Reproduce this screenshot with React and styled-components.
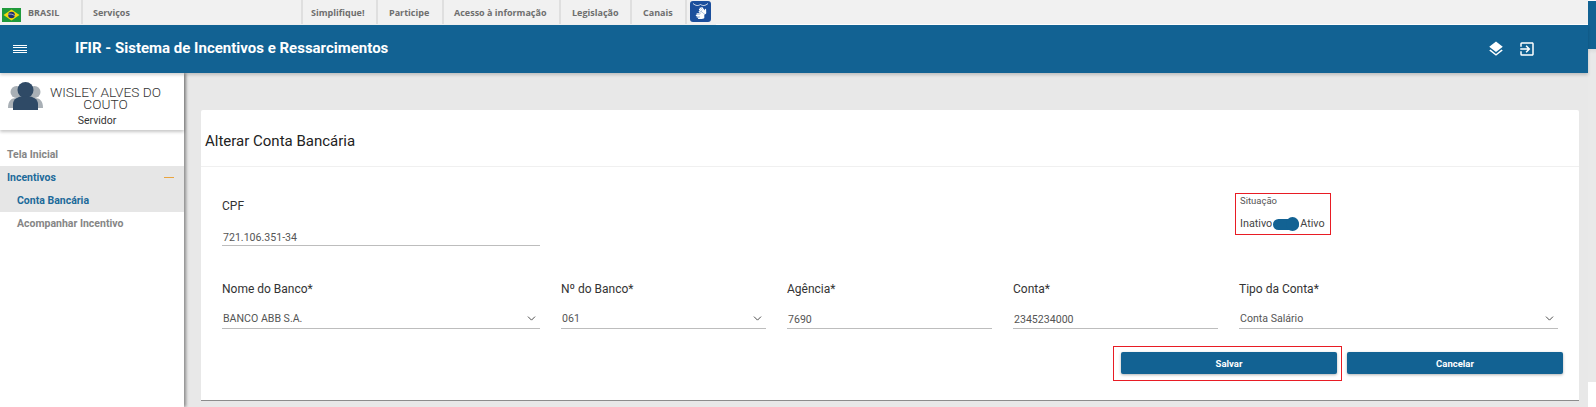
import React from "react";
import styled, { createGlobalStyle } from "styled-components";
import { MdLayers, MdExitToApp } from "react-icons/md";
import { FaSignLanguage } from "react-icons/fa";
import { ChevronDown } from "lucide-react";

const Global = createGlobalStyle`
  html, body { margin: 0; padding: 0; background: #fff; overflow: hidden; }
  * { box-sizing: border-box; }
  body { font-family: Roboto, "Liberation Sans", sans-serif; }
`;

const Page = styled.div`
  display: flex;
  width: 1596px;
  height: 407px;
  overflow: hidden;
`;
const Main = styled.div`
  width: 1588px;
  display: flex;
  flex-direction: column;
  background: #e8e8e8;
`;
const Strip = styled.div`
  width: 8px;
  display: flex;
  flex-direction: column;
  background: #fff;
`;
const StripBlue = styled.div`
  height: 48px;
  margin-top: 1px;
  background: #126293;
`;
const StripGrey = styled.div`
  height: 333px;
  background: linear-gradient(#dcdcdc, #e9e9e9 5px);
`;

const GovBar = styled.div`
  height: 25px;
  display: flex;
  background: #f1f1f1;
  font-family: "Open Sans", sans-serif;
  font-size: 9px;
  font-weight: 700;
  color: #6e6e6e;
`;
const Flag = styled.svg`
  width: 19px;
  height: 14px;
  margin: 5px 7px 0 2px;
  flex: none;
`;
const GovItem = styled.div`
  width: ${p => p.$w}px;
  height: 24px;
  padding-left: ${p => p.$pad}px;
  display: flex;
  align-items: center;
  border-right: ${p => (p.$sep ? "2px solid #dfdfdf" : "none")};
  flex: none;
`;
const SignButton = styled.div`
  width: 21px;
  height: 21px;
  margin: 1px 0 0 3px;
  border-radius: 3px;
  background: #1c4f9c;
  color: #fff;
  position: relative;
  display: flex;
  align-items: flex-end;
  justify-content: center;
  padding-bottom: 3px;
  flex: none;
`;
const Arch = styled.svg`
  position: absolute;
  left: 2px;
  top: 1px;
  width: 17px;
  height: 5px;
`;
const GovRest = styled.div`
  flex: 1;
  height: 25px;
  margin-left: 5px;
  border-bottom: 1px solid #fff;
`;

const Header = styled.header`
  height: 48px;
  background: #126293;
  display: flex;
  align-items: center;
  color: #fff;
  position: relative;
  z-index: 2;
  box-shadow: 0 2px 3px rgba(0, 0, 0, 0.18);
`;
const Burger = styled.div`
  width: 14px;
  height: 9px;
  margin-left: 13px;
  display: flex;
  flex-direction: column;
  justify-content: space-between;
  flex: none;
`;
const BurgerLine = styled.span`
  display: block;
  height: 1px;
  background: #fff;
`;
const AppTitle = styled.h1`
  margin: -2px 0 0 48px;
  font-size: 15px;
  font-weight: 700;
  line-height: 20px;
  flex: 1;
`;
const HeaderIcons = styled.div`
  display: flex;
  align-items: center;
  gap: 13px;
  margin-right: 52px;
`;

const Body = styled.div`
  flex: 1;
  display: flex;
  min-height: 0;
`;
const Sidebar = styled.aside`
  width: 184px;
  background: #fff;
  box-shadow: 2px 0 3px rgba(0, 0, 0, 0.4);
  flex: none;
  position: relative;
  z-index: 1;
`;
const Profile = styled.div`
  height: 57px;
  display: flex;
  padding: 6px 0 0 8px;
  box-shadow: 0 2px 3px rgba(0, 0, 0, 0.22);
`;
const Avatar = styled.svg`
  width: 35px;
  height: 29px;
  margin-top: 3px;
  flex: none;
`;
const ProfileText = styled.div`
  width: 119px;
  margin-left: 3px;
  text-align: center;
  color: #333;
`;
const UserName = styled.div`
  font-size: 13.7px;
  font-weight: 300;
  line-height: 12px;
  padding-top: 7px;
`;
const UserRole = styled.div`
  font-size: 10.5px;
  line-height: 13px;
  margin-top: 4px;
  padding-right: 17px;
`;
const Menu = styled.nav`
  padding-top: 13px;
`;
const MenuRow = styled.div`
  height: 23px;
  display: flex;
  align-items: center;
  justify-content: space-between;
  padding: 0 10px 0 ${p => (p.$sub ? 17 : 7)}px;
  font-size: 10.5px;
  font-weight: 700;
  color: ${p => (p.$active ? "#1d6a9a" : "#868686")};
  background: ${p => (p.$active ? "#e6e6e6" : "transparent")};
`;
const Minus = styled.span`
  width: 10px;
  height: 1px;
  background: #e9a43f;
`;

const Content = styled.main`
  flex: 1;
  padding: 37px 9px 0 17px;
  min-width: 0;
`;
const Card = styled.section`
  height: 291px;
  background: #fff;
  border-radius: 2px 2px 0 0;
  border-bottom: 1px solid #8c8c8c;
`;
const CardHead = styled.div`
  height: 57px;
  padding: 22px 0 0 4px;
  border-bottom: 1px solid #f0f0f0;
`;
const CardTitle = styled.h2`
  margin: 0;
  font-size: 15px;
  line-height: 18px;
  font-weight: 400;
  color: #222;
`;
const CardBody = styled.div`
  padding: 31px 16px 0 21px;
`;
const FormGrid = styled.div`
  display: grid;
  grid-template-columns: 318px 205px 205px 205px 319px;
  column-gap: 21px;
  row-gap: 35px;
`;
const Field = styled.div`
  display: flex;
  flex-direction: column;
  grid-column: ${p => p.$col || "auto"};
`;
const Label = styled.label`
  font-size: 12px;
  line-height: 16px;
  color: #333;
`;
const Control = styled.div`
  height: 32px;
  display: flex;
  align-items: center;
  justify-content: space-between;
  padding: ${p => p.$top}px 2px 0 1px;
  border-bottom: 1px solid #bdbdbd;
  font-size: 10.6px;
  color: #555;
`;
const StatusBox = styled.div`
  grid-column: 5;
  grid-row: 1;
  width: 96px;
  height: 42px;
  margin: -5px 0 0 -4px;
  padding: 1px 0 0 4px;
  border: 1px solid #e81c24;
  color: #444;
  font-size: 10.8px;
`;
const StatusTitle = styled.div`
  font-size: 9.5px;
  line-height: 12px;
  color: #555;
`;
const StatusRow = styled.div`
  display: flex;
  align-items: center;
  gap: 1px;
  margin-top: 9px;
  line-height: 16px;
`;
const Toggle = styled.div`
  width: 26px;
  height: 11px;
  border-radius: 6px;
  background: #126293;
  position: relative;
  flex: none;
  &::after {
    content: "";
    position: absolute;
    right: 0;
    top: -2px;
    width: 13px;
    height: 14px;
    border-radius: 50%;
    background: #126293;
  }
`;
const Actions = styled.div`
  display: flex;
  justify-content: flex-end;
  gap: 10px;
  margin-top: 23px;
`;
const ActionButton = styled.button`
  width: 216px;
  height: 22px;
  padding: 0;
  border: 0;
  border-radius: 2px;
  background: #126293;
  color: #fff;
  font: 700 9.5px Roboto, sans-serif;
  box-shadow: 0 1px 3px rgba(0, 0, 0, 0.3);
  position: relative;
  &::after {
    content: "";
    display: ${p => (p.$marked ? "block" : "none")};
    position: absolute;
    left: -8px;
    right: -5px;
    top: -6px;
    bottom: -7px;
    border: 1px solid #e81c24;
  }
`;

const FlagIcon = () => (
  <Flag viewBox="0 0 19 14">
    <rect width="19" height="14" fill="#1f9a3c" />
    <polygon points="9.5,1.5 17.5,7 9.5,12.5 1.5,7" fill="#f5d90a" />
    <circle cx="9.5" cy="7" r="3.3" fill="#23306f" />
    <path d="M6.4 6.2c2-.4 4.4 0 6.2 1.4" stroke="#fff" strokeWidth=".6" fill="none" />
  </Flag>
);

const AvatarIcon = () => (
  <Avatar viewBox="0 0 35 29">
    <g fill="#a9b0b6">
      <circle cx="8.500" cy="10" r="6" />
      <path d="M0 26c0-7 3-10 8.500-10S17 19 17 26z" />
      <circle cx="26.500" cy="10" r="6" />
      <path d="M18 26c0-7 3-10 8.500-10S35 19 35 26z" />
    </g>
    <circle cx="17.500" cy="8" r="8" fill="#2f4a66" />
    <path d="M5 28v-6c0-5 5-8 12.500-8S30 17 30 22v6z" fill="#2f4a66" />
  </Avatar>
);

const govItems = [
  { label: "Simplifique!", w: 75, pad: 8 },
  { label: "Participe", w: 66, pad: 11 },
  { label: "Acesso à informação", w: 117, pad: 10 },
  { label: "Legislação", w: 71, pad: 11 },
  { label: "Canais", w: 55, pad: 11 },
];

const SelectControl = ({ children }) => (
  <Control $top={12}>
    <span>{children}</span>
    <ChevronDown size={13} strokeWidth={1.8} color="#4a4a4a" />
  </Control>
);

export default function App() {
  return (
    <>
      <Global />
      <Page>
        <Main>
          <GovBar>
            <GovItem $w={83} $pad={0} $sep>
              <FlagIcon />
              BRASIL
            </GovItem>
            <GovItem $w={220} $pad={10} $sep>Serviços</GovItem>
            {govItems.map(i => (
              <GovItem key={i.label} $w={i.w} $pad={i.pad} $sep>{i.label}</GovItem>
            ))}
            <SignButton>
              <Arch viewBox="0 0 17 5">
                <path d="M1 1.500C4 4 6 4 8.500 2.500 11 4 13 4 16 1.500" stroke="#fff" strokeWidth=".8" fill="none" />
              </Arch>
              <FaSignLanguage size={12} />
            </SignButton>
            <GovRest />
          </GovBar>
          <Header>
            <Burger>
              <BurgerLine />
              <BurgerLine />
              <BurgerLine />
              <BurgerLine />
            </Burger>
            <AppTitle>IFIR - Sistema de Incentivos e Ressarcimentos</AppTitle>
            <HeaderIcons>
              <MdLayers size={18} />
              <MdExitToApp size={18} />
            </HeaderIcons>
          </Header>
          <Body>
            <Sidebar>
              <Profile>
                <AvatarIcon />
                <ProfileText>
                  <UserName>WISLEY ALVES DO COUTO</UserName>
                  <UserRole>Servidor</UserRole>
                </ProfileText>
              </Profile>
              <Menu>
                <MenuRow>Tela Inicial</MenuRow>
                <MenuRow $active>Incentivos<Minus /></MenuRow>
                <MenuRow $active $sub>Conta Bancária</MenuRow>
                <MenuRow $sub>Acompanhar Incentivo</MenuRow>
              </Menu>
            </Sidebar>
            <Content>
              <Card>
                <CardHead>
                  <CardTitle>Alterar Conta Bancária</CardTitle>
                </CardHead>
                <CardBody>
                  <FormGrid>
                    <Field>
                      <Label>CPF</Label>
                      <Control $top={16}>721.106.351-34</Control>
                    </Field>
                    <StatusBox>
                      <StatusTitle>Situação</StatusTitle>
                      <StatusRow>
                        Inativo
                        <Toggle />
                        Ativo
                      </StatusRow>
                    </StatusBox>
                    <Field $col="1">
                      <Label>Nome do Banco*</Label>
                      <SelectControl>BANCO ABB S.A.</SelectControl>
                    </Field>
                    <Field>
                      <Label>Nº do Banco*</Label>
                      <SelectControl>061</SelectControl>
                    </Field>
                    <Field>
                      <Label>Agência*</Label>
                      <Control $top={14}>7690</Control>
                    </Field>
                    <Field>
                      <Label>Conta*</Label>
                      <Control $top={14}>2345234000</Control>
                    </Field>
                    <Field>
                      <Label>Tipo da Conta*</Label>
                      <SelectControl>Conta Salário</SelectControl>
                    </Field>
                  </FormGrid>
                  <Actions>
                    <ActionButton $marked>Salvar</ActionButton>
                    <ActionButton>Cancelar</ActionButton>
                  </Actions>
                </CardBody>
              </Card>
            </Content>
          </Body>
        </Main>
        <Strip>
          <StripBlue />
          <StripGrey />
        </Strip>
      </Page>
    </>
  );
}
